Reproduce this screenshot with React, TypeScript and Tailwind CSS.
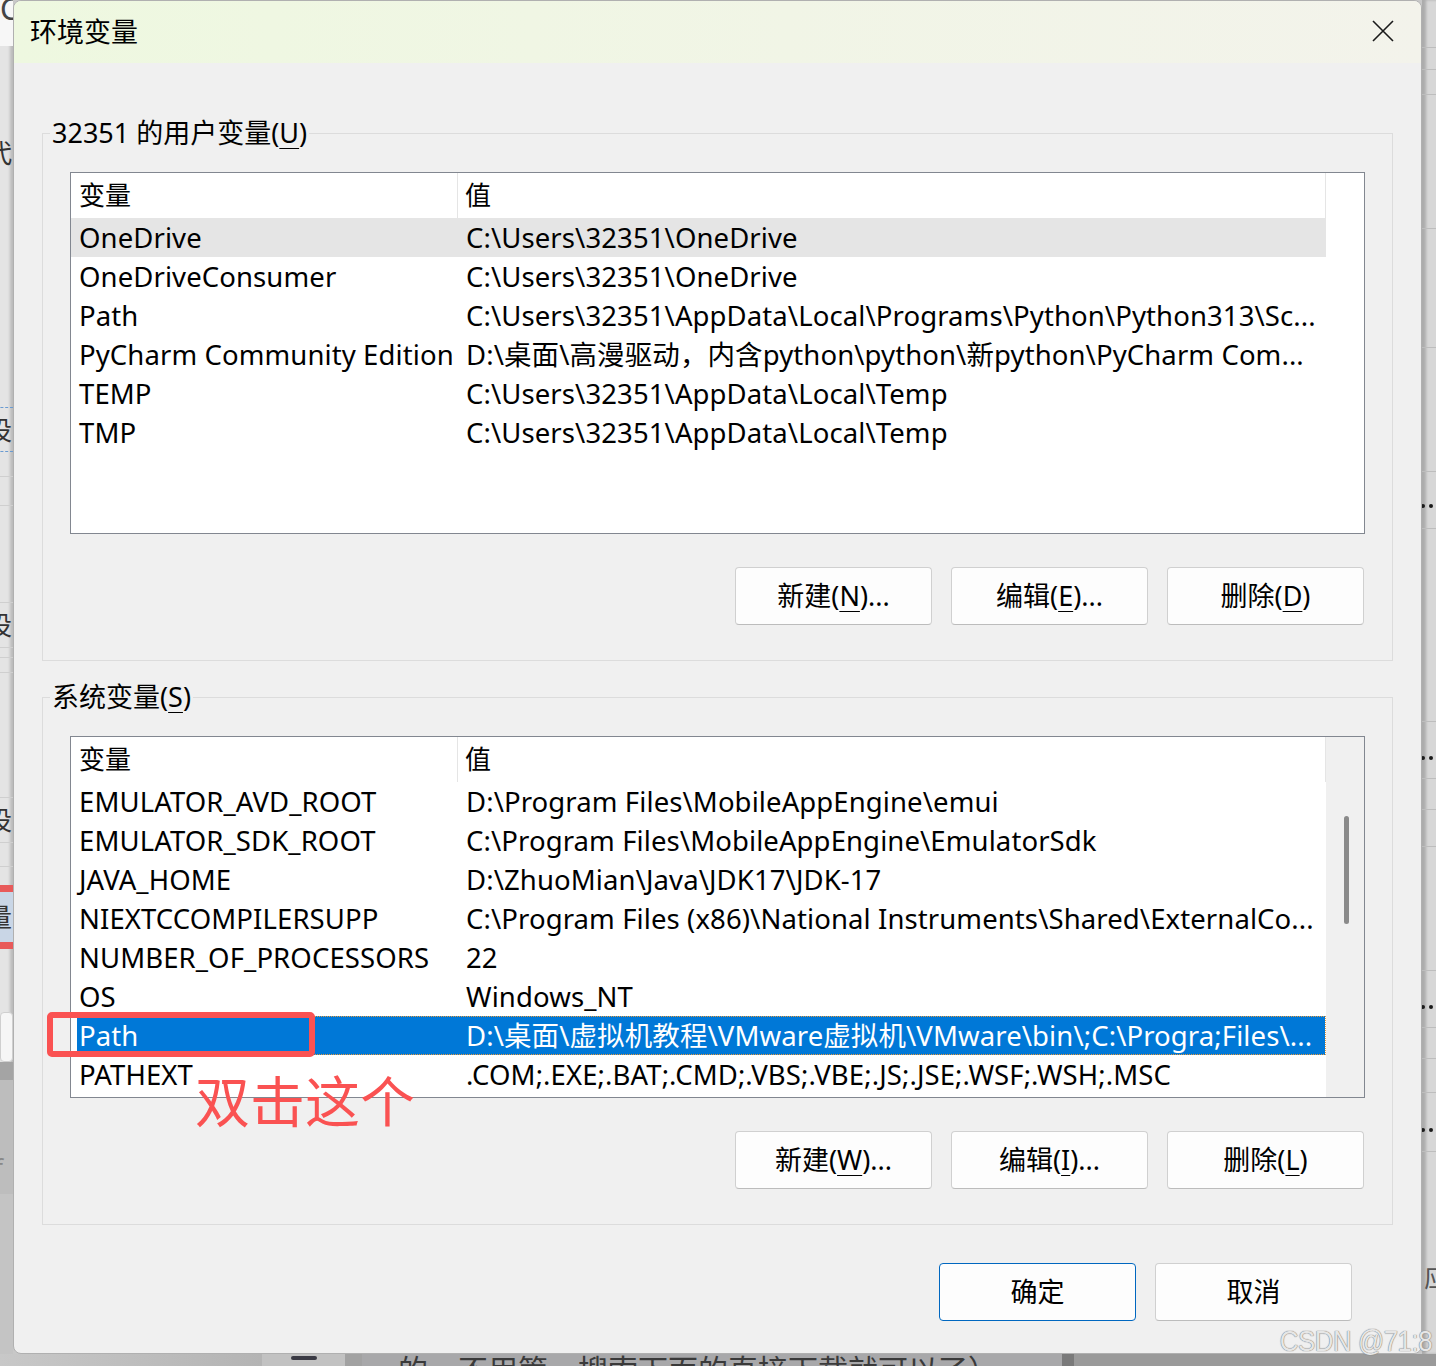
import React from 'react';

const ui = "font-['Noto_Sans','Noto_Sans_CJK_SC',sans-serif]";

const userVars: [string, string][] = [
  ['OneDrive', 'C:\\Users\\32351\\OneDrive'],
  ['OneDriveConsumer', 'C:\\Users\\32351\\OneDrive'],
  ['Path', 'C:\\Users\\32351\\AppData\\Local\\Programs\\Python\\Python313\\Sc...'],
  ['PyCharm Community Edition', 'D:\\桌面\\高漫驱动，内含python\\python\\新python\\PyCharm Com...'],
  ['TEMP', 'C:\\Users\\32351\\AppData\\Local\\Temp'],
  ['TMP', 'C:\\Users\\32351\\AppData\\Local\\Temp'],
];

const systemVars: [string, string][] = [
  ['EMULATOR_AVD_ROOT', 'D:\\Program Files\\MobileAppEngine\\emui'],
  ['EMULATOR_SDK_ROOT', 'C:\\Program Files\\MobileAppEngine\\EmulatorSdk'],
  ['JAVA_HOME', 'D:\\ZhuoMian\\Java\\JDK17\\JDK-17'],
  ['NIEXTCCOMPILERSUPP', 'C:\\Program Files (x86)\\National Instruments\\Shared\\ExternalCo...'],
  ['NUMBER_OF_PROCESSORS', '22'],
  ['OS', 'Windows_NT'],
  ['Path', 'D:\\桌面\\虚拟机教程\\VMware虚拟机\\VMware\\bin\\;C:\\Progra;Files\\...'],
  ['PATHEXT', '.COM;.EXE;.BAT;.CMD;.VBS;.VBE;.JS;.JSE;.WSF;.WSH;.MSC'],
];

function Key({ k }: { k: string }) {
  return <span className="underline decoration-1 underline-offset-[5px]">{k}</span>;
}

function Button({ children, primary }: { children: React.ReactNode; primary?: boolean }) {
  return (
    <button
      className={`w-[197px] h-[58px] rounded-[4px] bg-[#fdfdfd] text-[27px] text-black flex items-center justify-center ${
        primary ? 'border border-[#0067c0]' : 'border border-[#d0d0d0] border-b-[#bcbcbc]'
      }`}
    >
      {children}
    </button>
  );
}

function VarList({
  rows,
  hover,
  selected,
  scroll,
}: {
  rows: [string, string][];
  hover?: number;
  selected?: number;
  scroll?: boolean;
}) {
  return (
    <div className="h-[362px] border border-[#828790] bg-white flex overflow-hidden">
      <div className="w-[1255px] flex flex-col">
        <div className="h-[45px] shrink-0 flex items-center text-[26px]">
          <div className="w-[387px] h-full pl-[8px] flex items-center border-r border-[#e5e5e5]">变量</div>
          <div className="flex-1 h-full pl-[7px] flex items-center border-r border-[#e5e5e5]">值</div>
        </div>
        {rows.map(([name, value], i) => {
          const sel = i === selected;
          const bg = sel
            ? 'bg-[linear-gradient(to_right,#fff_6px,#0078d7_6px)] text-white border-y border-r border-dotted border-[#e89a3c]'
            : i === hover
              ? 'bg-[#e5e5e5]'
              : '';
          return (
            <div
              key={name + i}
              className={`h-[39px] shrink-0 flex items-center text-[27.5px] tracking-[0.1px] whitespace-nowrap ${bg}`}
            >
              <div className="w-[387px] pl-[8px] overflow-hidden">{name}</div>
              <div className="flex-1 pl-[8px] overflow-hidden">{value}</div>
            </div>
          );
        })}
      </div>
      <div className={`flex-1 flex justify-center ${scroll ? 'bg-[#f0f0f0]' : 'bg-white'}`}>
        {scroll && <div className="mt-[79px] ml-[2px] w-[5px] h-[108px] rounded-full bg-[#8a8a8a]" />}
      </div>
    </div>
  );
}

function Group({ label, children }: { label: React.ReactNode; children: React.ReactNode }) {
  return (
    <fieldset className="border border-[#dcdcdc] px-[27px] pb-[35px]">
      <legend className="-ml-[20px] px-[2px] text-[27px] leading-[36px] text-black">{label}</legend>
      {children}
    </fieldset>
  );
}

function Glyph({ h, children, cls = '' }: { h: number; children?: React.ReactNode; cls?: string }) {
  return (
    <div className={`shrink-0 flex items-center -ml-[14px] ${cls}`} style={{ height: h }}>
      {children}
    </div>
  );
}

function LeftStrip() {
  return (
    <div className="w-[13px] h-full flex flex-col overflow-hidden bg-[#e4e4e4] text-[#333] text-[26px] leading-none shadow-[inset_-3px_0_3px_rgba(0,0,0,0.18)]">
      <div className="h-[46px] shrink-0 bg-[#f7f7f7] overflow-hidden">
        <div className="text-[30px] -mt-[6px] text-[#444]">C</div>
      </div>
      <div className="h-[84px] shrink-0" />
      <Glyph h={45}>代</Glyph>
      <div className="h-[232px] shrink-0" />
      <Glyph h={45} cls="border-y border-dashed border-[#6a9bd1]">设</Glyph>
      <div className="h-[25px] shrink-0 border-b border-[#cfcfcf]" />
      <div className="h-[29px] shrink-0 border-b border-[#cfcfcf]" />
      <div className="h-[97px] shrink-0 border-b border-[#cfcfcf]" />
      <Glyph h={45} cls="border-b border-[#cfcfcf]">设</Glyph>
      <div className="h-[10px] shrink-0 border-b border-[#cfcfcf]" />
      <div className="h-[15px] shrink-0 border-b border-[#cfcfcf]" />
      <div className="h-[125px] shrink-0 border-b border-[#cfcfcf]" />
      <Glyph h={45} cls="border-b border-[#cfcfcf]">设</Glyph>
      <div className="h-[24px] shrink-0 border-b border-[#cfcfcf]" />
      <div className="h-[18px] shrink-0" />
      <Glyph h={64} cls="bg-[#c9d6e6] border-y-[7px] border-[#e85a5a]">量</Glyph>
      <div className="h-[63px] shrink-0" />
      <div className="h-[50px] shrink-0 bg-[#f6f6f6] border border-[#cfcfcf] rounded-[4px]" />
      <div className="h-[18px] shrink-0 bg-[#a4a4a4]" />
      <div className="h-[74px] shrink-0 bg-[#bdbdbd]" />
      <div className="h-[40px] shrink-0 bg-[#bdbdbd] -ml-[6px] text-[#888]">f</div>
      <div className="flex-1 bg-[#c4c4c4]" />
    </div>
  );
}

// row boundaries of the window behind, on the right; dots give the y of a clipped "..."
const rightRules = [48, 70, 95, 229, 348, 472, 529, 722, 779, 810, 847, 971, 1028, 1059, 1093, 1152, 1354];
const rightDots: Record<number, number> = { 529: 507, 779: 759, 1028: 1008, 1152: 1131 };

function RightStrip() {
  return (
    <div className="w-[14px] h-full flex flex-col bg-[#d7d7d7] shadow-[inset_4px_0_3px_rgba(0,0,0,0.2)] overflow-hidden text-[#222]">
      {rightRules.map((y, i) => {
        const top = i ? rightRules[i - 1] : 0;
        const dot = rightDots[y];
        return (
          <div
            key={y}
            className={`shrink-0 overflow-hidden whitespace-nowrap ${y < 1354 ? 'border-b border-[#bdbdbd]' : ''}`}
            style={{ height: y - top }}
          >
            {dot && (
              <div className="ml-[-1px] h-[6px] flex gap-[4px]" style={{ marginTop: dot - top - 3 }}>
                <span className="w-[4px] h-[4px] rounded-full bg-[#1a1a1a]" />
                <span className="w-[4px] h-[4px] rounded-full bg-[#1a1a1a]" />
              </div>
            )}
            {y === 1354 && <div className="mt-[112px] ml-[2px] text-[26px] leading-none text-[#555]">应</div>}
          </div>
        );
      })}
    </div>
  );
}

function BottomStrip() {
  return (
    <div className="h-[12px] flex overflow-hidden">
      <div className="w-[262px] bg-[linear-gradient(to_right,#c8c8c8,#b4b4b4)]" />
      <div className="w-[83px] bg-[#c2c2c2] flex justify-center">
        <div className="mt-[2px] w-[26px] h-[4px] rounded-full bg-[#3a3a44]" />
      </div>
      <div className="w-[17px] bg-[#a2a2a2]" />
      <div className="w-[700px] bg-[#a8a8aa] pl-[36px]">
        <div className="text-[30px] leading-none -mt-[1px] text-[#3a3a3a] whitespace-nowrap font-['Noto_Sans_CJK_SC',sans-serif]">
          的，不用管，搜索下面的直接下载就可以了）
        </div>
      </div>
      <div className="w-[12px] bg-[#7a7a7a]" />
      <div className="flex-1 bg-[#9a9a9a]" />
    </div>
  );
}

export default function App() {
  return (
    <div className={`relative w-[1436px] h-[1366px] overflow-hidden bg-[#c8c8c8] flex flex-col ${ui}`}>
      <div className="h-[1354px] flex">
        <LeftStrip />
        <div className="w-[1409px] h-full rounded-[8px] border border-[#b0b0b0] bg-[#f0f0f0] overflow-hidden flex flex-col text-black">
          {/* title bar */}
          <div className="h-[62px] shrink-0 flex items-center justify-between pl-[16px] pr-[27px] bg-[linear-gradient(to_right,#eef8e0,#f1f5e6_55%,#f3f3eb)]">
            <span className="text-[27px]">环境变量</span>
            <svg width="22" height="22" viewBox="0 0 22 22" className="mt-[-2px]">
              <path d="M1 1 L21 21 M21 1 L1 21" stroke="#1a1a1a" strokeWidth="1.6" />
            </svg>
          </div>

          <div className="px-[28px] pt-[52px] flex flex-col">
            <Group
              label={
                <>
                  32351 的用户变量(<Key k="U" />)
                </>
              }
            >
              <div className="mt-[21px]">
                <VarList rows={userVars} hover={0} />
              </div>
              <div className="mt-[33px] flex justify-end gap-[19px] pr-[1px]">
                <Button>
                  新建(<Key k="N" />)...
                </Button>
                <Button>
                  编辑(<Key k="E" />)...
                </Button>
                <Button>
                  删除(<Key k="D" />)
                </Button>
              </div>
            </Group>

            <div className="mt-[18px]">
              <Group
                label={
                  <>
                    系统变量(<Key k="S" />)
                  </>
                }
              >
                <div className="mt-[21px] relative">
                  <VarList rows={systemVars} selected={6} scroll />
                  {/* red hint drawn over the list */}
                  <div className="absolute left-[-23px] top-[276px] w-[268px] h-[45px] border-[6px] border-[#fa5252] rounded-[5px]" />
                  <div className="absolute left-[125px] top-[335px] text-[55px] leading-none text-[#fa5252] font-['Noto_Sans_CJK_SC',sans-serif] whitespace-nowrap">
                    双击这个
                  </div>
                </div>
                <div className="mt-[33px] flex justify-end gap-[19px] pr-[1px]">
                  <Button>
                    新建(<Key k="W" />)...
                  </Button>
                  <Button>
                    编辑(<Key k="I" />)...
                  </Button>
                  <Button>
                    删除(<Key k="L" />)
                  </Button>
                </div>
              </Group>
            </div>

            <div className="mt-[38px] flex justify-end gap-[19px] pr-[41px]">
              <Button primary>确定</Button>
              <Button>取消</Button>
            </div>
          </div>
        </div>
        <RightStrip />
      </div>
      <BottomStrip />
      <div className="absolute right-[4px] bottom-[10px] text-[30px] leading-none text-[#e6e6e6] font-['Liberation_Sans',sans-serif] [text-shadow:0_0_1px_#777,0_0_1px_#777] tracking-[-0.5px] scale-x-[0.86] origin-right">
        CSDN @71:8
      </div>
    </div>
  );
}
